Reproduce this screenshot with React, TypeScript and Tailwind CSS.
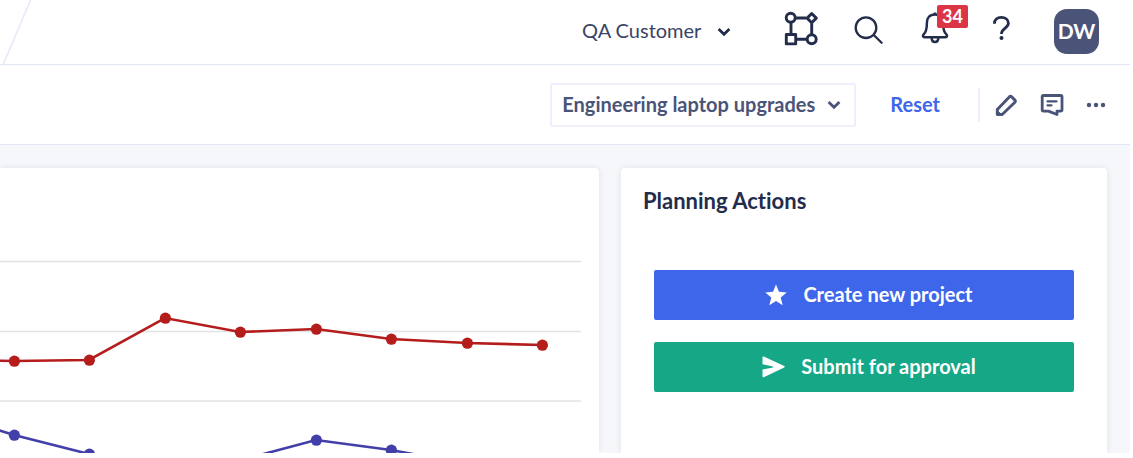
import React, { useState } from "react";

const RED = [
  [-61, 192], [14, 193], [89, 192], [165, 150], [240, 164], [316, 161], [391, 171], [467, 175], [542, 177],
];
const BLUE = [
  [-61, 243], [14, 267], [89, 286], [165, 308], [241, 292], [316, 272], [391, 282], [467, 296], [542, 304],
];

function Chevron({ className = "" }: { className?: string }) {
  return (
    <svg viewBox="0 0 14 10" className={`pointer-events-none h-2.5 w-3.5 ${className}`} fill="none" stroke="currentColor" strokeWidth="2.8">
      <path d="M1.6 2 7 7.2 12.4 2" />
    </svg>
  );
}

function Series({ points, color }: { points: number[][]; color: string }) {
  return (
    <g fill={color}>
      <polyline points={points.map((p) => p.join(",")).join(" ")} fill="none" stroke={color} strokeWidth="2.6" />
      {points.map(([x, y]) => (
        <circle key={x} cx={x + 0.4} cy={y + 0.2} r="5.6" />
      ))}
    </g>
  );
}

function TopBar() {
  const [customer, setCustomer] = useState("QA Customer");
  return (
    <header className="flex items-start justify-between border-b border-[#e2e7f8] pr-[31px] text-[#232d4b]">
      <svg viewBox="0 0 32 64" className="h-16 w-8" stroke="#e6eafa" strokeWidth="1.6">
        <path d="M31 -1 3 65" />
      </svg>
      <div className="flex items-center pt-[9px]">
        <label className="mr-[53px] grid items-center text-[#3a4465]">
          <select
            aria-label="Customer"
            value={customer}
            onChange={(e) => setCustomer(e.target.value)}
            className="col-start-1 row-start-1 appearance-none bg-transparent pr-[28px] pb-1 text-xl leading-6"
          >
            <option>QA Customer</option>
          </select>
          <Chevron className="col-start-1 row-start-1 justify-self-end text-[#232d4b]" />
        </label>
        <button aria-label="Workflows" className="mr-9">
          <svg viewBox="0 0 34 45" className="h-[45px] w-[34px]" fill="none" stroke="currentColor" strokeWidth="2.9">
            <path d="M11.500 9H22M7 14v11M12.500 30.200H23M27.700 14.500v11" />
            <circle cx="6.700" cy="8.800" r="4.500" />
            <circle cx="27.700" cy="30.300" r="4.500" />
            <path d="m27.700 4.500 4.600 4.600-4.600 4.600L23.100 9.100z" strokeLinejoin="round" />
            <rect x="2.300" y="25.500" width="9.400" height="9.400" strokeLinejoin="round" />
          </svg>
        </button>
        <button aria-label="Search" className="mr-[38px]">
          <svg viewBox="0 0 29 45" className="h-[45px] w-[29px]" fill="none" stroke="currentColor" strokeWidth="2.3" strokeLinecap="round">
            <circle cx="12" cy="18.700" r="10.300" />
            <path d="m20 26.200 7.600 7.600" />
          </svg>
        </button>
        <button aria-label="Notifications" className="relative mr-11">
          <svg viewBox="0 0 28 45" className="h-[45px] w-7" fill="none" stroke="currentColor" strokeWidth="2.5" strokeLinejoin="round">
            <path d="M14 5.400c-5.400 0-8.100 3.600-8.100 8.400 0 6.800-1 9.700-3.300 11.700-1 1-.8 2.700.9 2.700h21c1.700 0 1.900-1.700.9-2.700-2.300-2-3.300-4.900-3.300-11.700 0-4.800-2.700-8.400-8.100-8.400z" />
            <path d="M14 3.400v2M10.700 29c0 5.400 6.600 5.400 6.600 0" />
          </svg>
          <span className="absolute -top-1 left-4 rounded-xs bg-[#dc3545] px-[5px] text-lg leading-[23px] font-bold text-white">34</span>
        </button>
        <button aria-label="Help" className="mr-11">
          <svg viewBox="0 0 17 45" className="h-[45px] w-[17px]" fill="none" stroke="currentColor" strokeWidth="2.8">
            <path d="M1.400 14.800C1.400 10.800 4.200 8.300 8.300 8.300c4.200 0 7.100 2.500 7.100 6 0 4.900-6.900 5-6.900 10.700" />
            <circle cx="8.500" cy="29" r="2" fill="currentColor" stroke="none" />
          </svg>
        </button>
        <button className="h-[45px] w-[45px] rounded-[13px] bg-[#4a5478] pb-0.5 text-[21px] font-bold text-white">DW</button>
      </div>
    </header>
  );
}

function Toolbar() {
  const [plan, setPlan] = useState("Engineering laptop upgrades");
  return (
    <div className="flex h-20 items-center justify-end border-b border-[#e2e7f8] pr-6 text-[#4a5478]">
      <label className="mr-[34px] grid items-center rounded-xs border-2 border-[#edf0fc] pr-[13px]">
        <select
          aria-label="Plan"
          value={plan}
          onChange={(e) => setPlan(e.target.value)}
          className="col-start-1 row-start-1 h-10 appearance-none bg-transparent pr-[26px] pb-0.5 pl-2.5 text-xl font-bold"
        >
          <option>Engineering laptop upgrades</option>
        </select>
        <Chevron className="col-start-1 row-start-1 justify-self-end" />
      </label>
      <button className="mr-[38px] pb-0.5 text-xl font-bold text-[#3e66ea]">Reset</button>
      <span className="mr-[15px] h-[34px] w-0.5 bg-[#edf0fc]" />
      <button aria-label="Edit" className="mr-[21px]">
        <svg viewBox="0 0 24 24" className="size-6" fill="none" stroke="currentColor" strokeWidth="2.9" strokeLinejoin="round">
          <path d="M2.300 21.500v-5L14.300 3.900c.8-.8 1.600-.8 2.400 0l3.200 3.200c.7.7.7 1.500 0 2.200L7.200 21.500z" />
          <path d="M2.300 17.500v4h4z" fill="currentColor" strokeWidth="1" />
        </svg>
      </button>
      <button aria-label="Comments" className="mr-[22px]">
        <svg viewBox="0 0 24 24" className="size-6" fill="none" stroke="currentColor" strokeWidth="2.8" strokeLinejoin="round" strokeLinecap="round">
          <path d="M3.500 2.500h17.200c.8 0 1.300.5 1.300 1.300v13c0 .8-.5 1.300-1.300 1.300H17v3.400l-8.500-3.400h-5c-.8 0-1.300-.5-1.300-1.300v-13c0-.8.5-1.300 1.300-1.300z" />
          <path d="M7.500 8.400h9M7.500 12.300h4" strokeWidth="2.200" />
        </svg>
      </button>
      <button aria-label="More">
        <svg viewBox="0 0 20 24" className="h-6 w-5" fill="currentColor">
          <circle cx="3" cy="12" r="2.200" />
          <circle cx="10" cy="12" r="2.200" />
          <circle cx="17" cy="12" r="2.200" />
        </svg>
      </button>
    </div>
  );
}

export default function App() {
  return (
    <div className="min-h-screen bg-white pr-[3px] font-['Lato','Open_Sans',sans-serif] [font-variant-ligatures:none]">
      <TopBar />
      <Toolbar />
      <main className="grid grid-cols-[599fr_486fr] gap-[22px] overflow-hidden bg-[#f6f7fa] pt-[23px] pr-[23px]">
        <section className="rounded-tr-sm bg-white shadow-[0_0_6px_rgba(40,40,70,0.1)]">
          <svg viewBox="0 0 599 285" className="block w-full" role="img" aria-label="Budget trend">
            <path d="M0 93.500h581M0 163.500h581M0 233h581" stroke="#e3e3e6" strokeWidth="1.500" />
            <Series points={RED} color="#b51d1d" />
            <Series points={BLUE} color="#423faa" />
          </svg>
        </section>
        <section className="rounded-t-sm bg-white px-[33px] pt-[19px] shadow-[0_0_6px_rgba(40,40,70,0.1)]">
          <h2 className="-ml-[11px] text-[22px] leading-7 font-bold text-[#232d4b]">Planning Actions</h2>
          <div className="mt-[55px] flex flex-col gap-[22px] text-xl font-bold text-white">
            <button className="flex h-[50px] items-center justify-center gap-4 rounded-xs bg-[#3e66ea] pl-2.5">
              <svg viewBox="0 0 22 22" className="size-[22px]" fill="currentColor">
                <path d="m11 .5 2.900 7.300 7.800.6-6 5 2 7.900L11 17l-6.700 4.300 2-7.900-6-5 7.800-.6z" />
              </svg>
              <span className="pb-0.5">Create new project</span>
            </button>
            <button className="flex h-[50px] items-center justify-center gap-4 rounded-xs bg-[#15a786] pl-2.5">
              <svg viewBox="0 0 23 22" className="h-[22px] w-[23px]" fill="currentColor">
                <path d="M.5 1.300c0-.8.600-1.100 1.300-.8l20.400 9.600c.8.400.8 1 0 1.400L1.800 21.200c-.7.300-1.300 0-1.300-.8v-7L11 11.600v-1.200L.5 8.300z" />
              </svg>
              <span className="pb-0.5">Submit for approval</span>
            </button>
          </div>
        </section>
      </main>
    </div>
  );
}
